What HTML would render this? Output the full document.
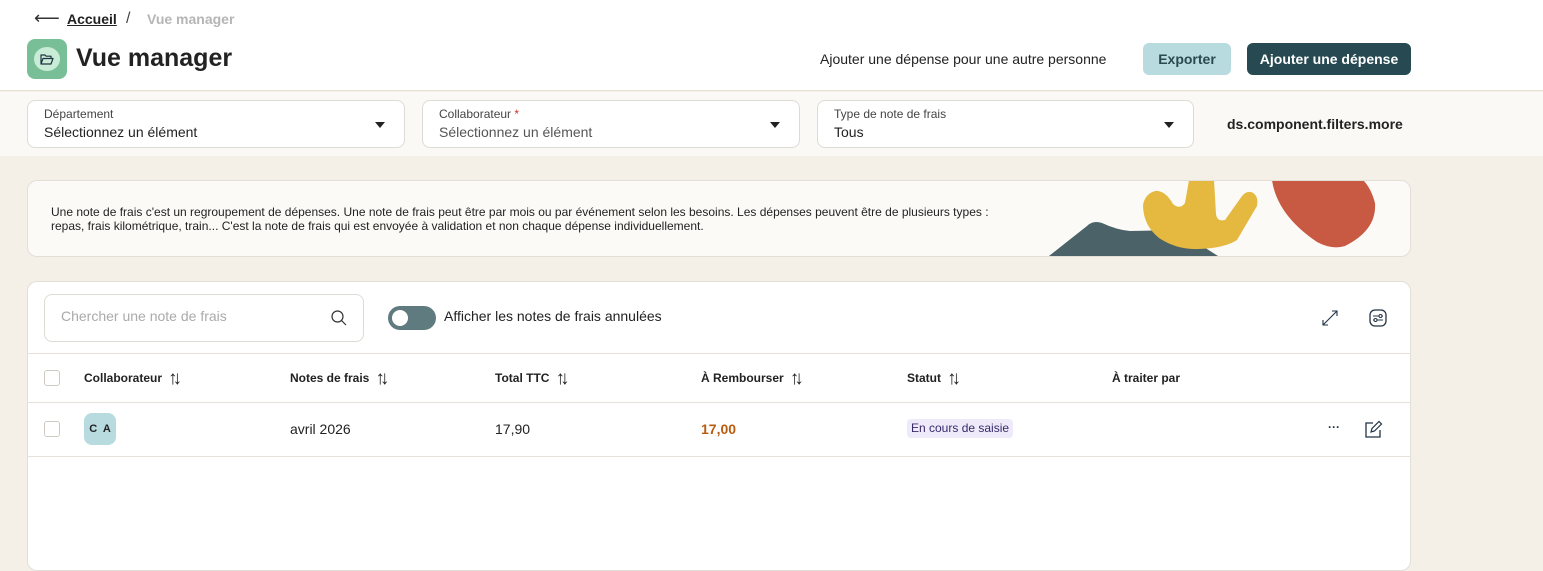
<!DOCTYPE html>
<html><head><meta charset="utf-8"><style>
*{box-sizing:border-box;margin:0;padding:0}
body{width:1543px;height:557px;overflow:hidden;background:#f4f0e8;font-family:"Liberation Sans",sans-serif;color:#222;position:relative}
.abs{position:absolute}
.hdr{left:0;top:0;width:1543px;height:91px;background:#fff;border-bottom:1px solid #e6e2da}
.fbar{left:0;top:92px;width:1543px;height:64px;background:#faf9f6}
.sel{top:100px;height:48px;width:378px;background:#fff;border:1px solid #dedbd5;border-radius:8px}
.sel .l{position:absolute;left:16px;top:6px;font-size:12px;color:#444}
.sel .v{position:absolute;left:16px;top:23px;font-size:14px;color:#222}
.sel .c{position:absolute;right:19px;top:21px;width:0;height:0;border-left:5px solid transparent;border-right:5px solid transparent;border-top:6px solid #222}
.btn{top:43px;height:32px;border-radius:6px;font-size:14px;font-weight:bold;text-align:center;line-height:32px}
.th{top:371px;font-size:12px;line-height:14px;font-weight:bold;color:#222}
.th span{font-weight:normal;font-size:19px;line-height:0;margin-left:6px;letter-spacing:-5px;position:relative;top:2px}
.td{top:421px;font-size:14px}
.cb{width:16px;height:16px;border:1px solid #cfcbc4;border-radius:3px;background:#fff}
</style></head><body>
<div class="abs hdr"></div>
<div class="abs" style="left:34px;top:8px;font-size:18px;color:#333">⟵</div>
<div class="abs" style="left:67px;top:11px;font-size:14px;font-weight:bold;text-decoration:underline;color:#222">Accueil</div>
<div class="abs" style="left:126px;top:10px;font-size:16px;color:#444">/</div>
<div class="abs" style="left:147px;top:11px;font-size:14px;font-weight:bold;color:#b5b5b5">Vue manager</div>
<div class="abs" style="left:27px;top:39px;width:40px;height:40px;border-radius:8px;background:#78bf98"></div>
<div class="abs" style="left:34px;top:47px;width:26px;height:24px;border-radius:50%;background:#c8ecd6"></div>
<svg class="abs" style="left:40px;top:54px" width="14" height="11" viewBox="0 0 14 11"><path d="M1 10V1h4l1.2 1.2H11V4M1 10l2-5.5h10L11 10z" fill="none" stroke="#234" stroke-width="1.2" stroke-linejoin="round"/></svg>
<div class="abs" style="left:76px;top:44px;font-size:25px;font-weight:bold;color:#222">Vue manager</div>
<div class="abs" style="left:820px;top:51px;font-size:14px;color:#222">Ajouter une dépense pour une autre personne</div>
<div class="abs btn" style="left:1143px;width:88px;background:#b8dbe0;color:#2a4a50">Exporter</div>
<div class="abs btn" style="left:1247px;width:164px;background:#274a52;color:#fff">Ajouter une dépense</div>
<div class="abs fbar"></div>
<div class="abs sel" style="left:27px"><div class="l">Département</div><div class="v">Sélectionnez un élément</div><div class="c"></div></div>
<div class="abs sel" style="left:422px"><div class="l">Collaborateur <span style="color:#c0392b">*</span></div><div class="v" style="color:#555">Sélectionnez un élément</div><div class="c"></div></div>
<div class="abs sel" style="left:817px;width:377px"><div class="l">Type de note de frais</div><div class="v">Tous</div><div class="c"></div></div>
<div class="abs" style="left:1227px;top:116px;font-size:14px;font-weight:bold;color:#222">ds.component.filters.more</div>
<div class="abs" style="left:27px;top:180px;width:1384px;height:77px;background:#fbfaf7;border:1px solid #e3dfd7;border-radius:10px;overflow:hidden">
<div class="abs" style="left:23px;top:24px;font-size:12px;line-height:14px;color:#222;width:945px">Une note de frais c'est un regroupement de dépenses. Une note de frais peut être par mois ou par événement selon les besoins. Les dépenses peuvent être de plusieurs types : repas, frais kilométrique, train... C'est la note de frais qui est envoyée à validation et non chaque dépense individuellement.</div>
<svg class="abs" style="left:-1px;top:-1px" width="1384" height="77" viewBox="0 0 1384 77"><path d="M1022 76L1060 46Q1066 40 1075 43Q1090 50 1103 51L1150 50L1191 76Z" fill="#4a6268"/><path d="M1128 11Q1118 14 1116 25Q1116 45 1132 58Q1150 70 1172 69Q1198 68 1210 60L1230 26Q1232 15 1224 12Q1219 11 1215 16L1198 40Q1190 42 1189 34L1187 0L1162 0L1158 23Q1153 30 1146 24Q1138 10 1128 11Z" fill="#e5b940"/><path d="M1245 0Q1250 35 1290 62Q1305 70 1318 66Q1350 50 1348 23Q1344 8 1336 0Z" fill="#c85a44"/></svg>
</div>
<div class="abs" style="left:27px;top:281px;width:1384px;height:290px;background:#fff;border:1px solid #e3dfd7;border-radius:10px"></div>
<div class="abs" style="left:44px;top:294px;width:320px;height:48px;border:1px solid #dedbd5;border-radius:8px"></div>
<div class="abs" style="left:61px;top:308px;font-size:14px;color:#aaa">Chercher une note de frais</div>
<svg class="abs" style="left:330px;top:309px" width="18" height="18" viewBox="0 0 18 18"><circle cx="7.5" cy="7.5" r="5.5" fill="none" stroke="#333" stroke-width="1.2"/><path d="M11.5 11.5L16 16" stroke="#333" stroke-width="1.2"/></svg>
<div class="abs" style="left:388px;top:306px;width:48px;height:24px;border-radius:12px;background:#5f7b80"></div>
<div class="abs" style="left:392px;top:310px;width:16px;height:16px;border-radius:50%;background:#fff"></div>
<div class="abs" style="left:444px;top:308px;font-size:14px;color:#222">Afficher les notes de frais annulées</div>
<svg class="abs" style="left:1321px;top:309px" width="18" height="18" viewBox="0 0 18 18"><path d="M2 16L16 2M11 2h5v5M2 11v5h5" fill="none" stroke="#234" stroke-width="1.1"/></svg>
<svg class="abs" style="left:1369px;top:309px" width="18" height="18" viewBox="0 0 18 18"><rect x="1" y="1" width="16" height="16" rx="5" fill="none" stroke="#234" stroke-width="1.3"/><path d="M4 7h10M4 11h10" stroke="#234" stroke-width="1.1"/><circle cx="11.5" cy="7" r="1.5" fill="#fff" stroke="#234"/><circle cx="6.5" cy="11" r="1.5" fill="#fff" stroke="#234"/></svg>
<div class="abs" style="left:28px;top:353px;width:1382px;height:1px;background:#e6e2da"></div>
<div class="abs" style="left:28px;top:402px;width:1382px;height:1px;background:#e6e2da"></div>
<div class="abs" style="left:28px;top:456px;width:1382px;height:1px;background:#e6e2da"></div>
<div class="abs cb" style="left:44px;top:370px"></div>
<div class="abs th" style="left:84px">Collaborateur<span>↑↓</span></div>
<div class="abs th" style="left:290px">Notes de frais<span>↑↓</span></div>
<div class="abs th" style="left:495px">Total TTC<span>↑↓</span></div>
<div class="abs th" style="left:701px">À Rembourser<span>↑↓</span></div>
<div class="abs th" style="left:907px">Statut<span>↑↓</span></div>
<div class="abs th" style="left:1112px">À traiter par</div>
<div class="abs cb" style="left:44px;top:421px"></div>
<div class="abs" style="left:84px;top:413px;width:32px;height:32px;border-radius:8px;background:#b8dbe0;font-size:11px;font-weight:bold;line-height:32px;text-align:center">C&nbsp; A</div>
<div class="abs td" style="left:290px">avril 2026</div>
<div class="abs td" style="left:495px">17,90</div>
<div class="abs td" style="left:701px;font-weight:bold;color:#b85c10">17,00</div>
<div class="abs" style="left:907px;top:419px;height:19px;padding:0 4px;background:#eeeafa;border-radius:4px;font-size:12px;line-height:19px;color:#3a2a6a">En cours de saisie</div>
<div class="abs" style="left:1328px;top:420px;font-size:12px;font-weight:bold;color:#234">···</div>
<svg class="abs" style="left:1365px;top:420px" width="18" height="18" viewBox="0 0 18 18"><path d="M8 3H1v14h14v-7" fill="none" stroke="#234" stroke-width="1.3"/><path d="M6 12l1-3.5 7-7 2.5 2.5-7 7z" fill="none" stroke="#234" stroke-width="1.2"/></svg>
</body></html>
